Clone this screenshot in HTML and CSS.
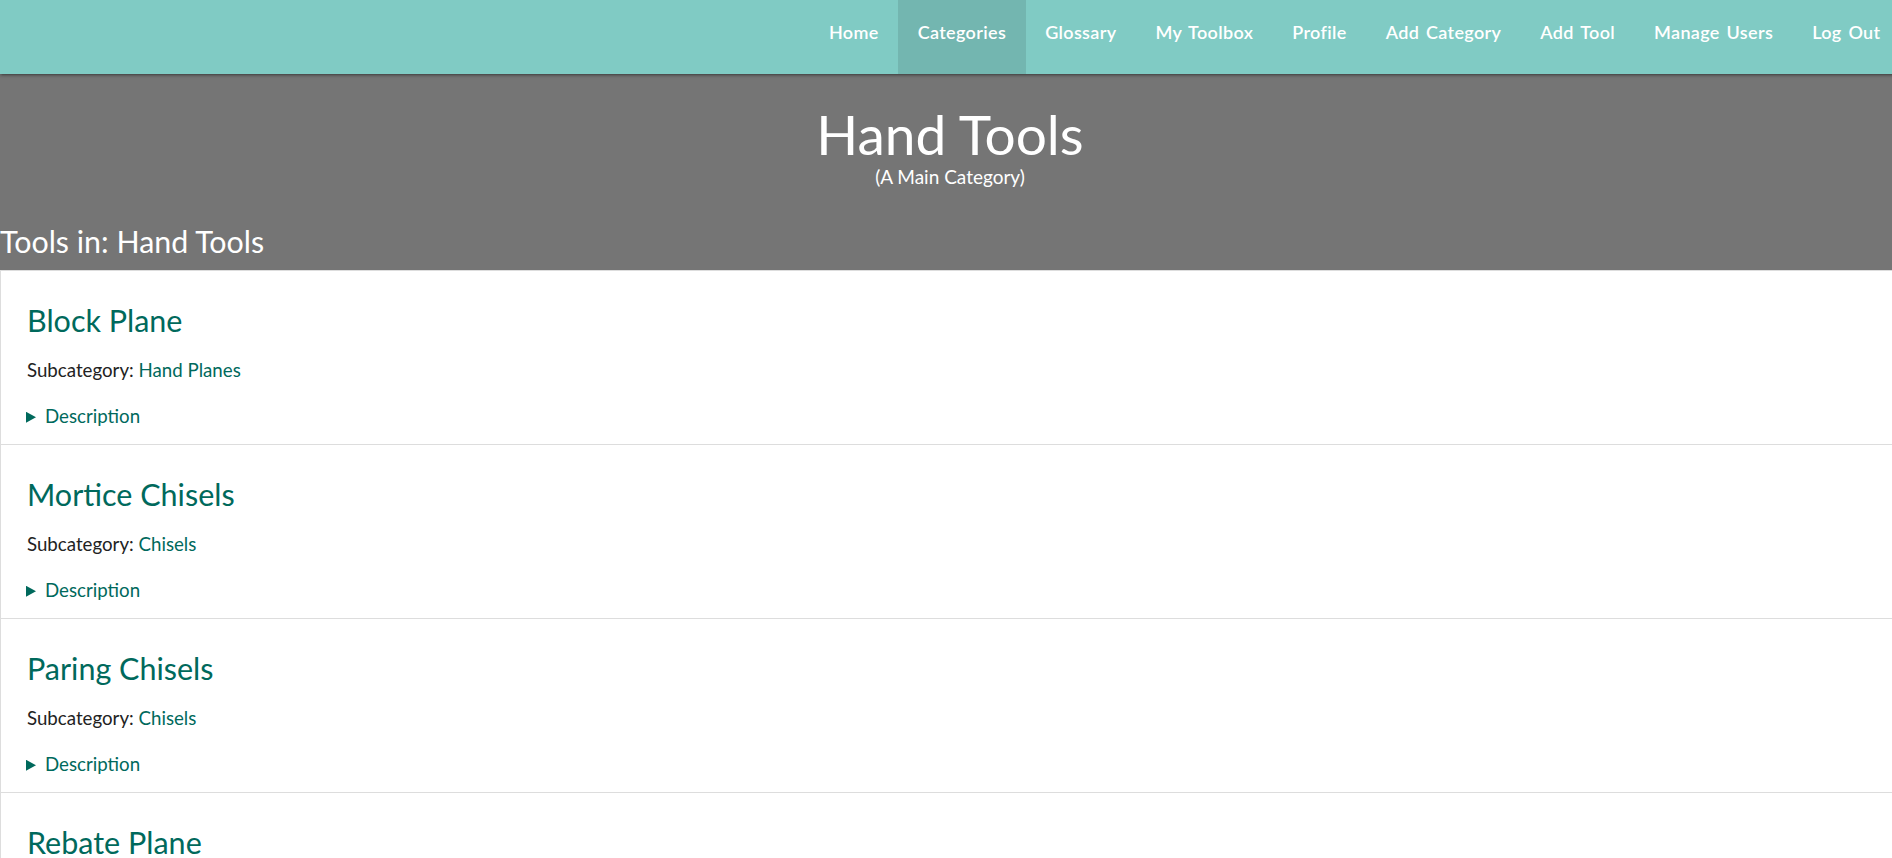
FILE: index.html
```html
<!DOCTYPE html>
<html lang="en">
<head>
<meta charset="utf-8">
<title>Hand Tools</title>
<link rel="stylesheet" href="styles.css">
</head>
<body>
<div class="page">
  <nav class="topnav">
    <ul class="nav-list">
      <li><a href="#" class="nav-link">Home</a></li>
      <li><a href="#" class="nav-link active">Categories</a></li>
      <li><a href="#" class="nav-link">Glossary</a></li>
      <li><a href="#" class="nav-link">My Toolbox</a></li>
      <li><a href="#" class="nav-link">Profile</a></li>
      <li><a href="#" class="nav-link">Add Category</a></li>
      <li><a href="#" class="nav-link">Add Tool</a></li>
      <li><a href="#" class="nav-link">Manage Users</a></li>
      <li><a href="#" class="nav-link">Log Out</a></li>
    </ul>
  </nav>

  <header class="cat-header">
    <h1 class="cat-title">Hand Tools</h1>
    <p class="cat-sub">(A Main Category)</p>
    <h2 class="cat-tools">Tools in: Hand Tools</h2>
  </header>

  <main class="tool-list">
    <article class="tool-card">
      <h3 class="tool-name">Block Plane</h3>
      <p class="tool-sub">Subcategory: <a href="#" class="tool-link">Hand Planes</a></p>
      <div class="tool-desc"><span class="tri"></span><span class="desc-text">Description</span></div>
    </article>
    <article class="tool-card">
      <h3 class="tool-name">Mortice Chisels</h3>
      <p class="tool-sub">Subcategory: <a href="#" class="tool-link">Chisels</a></p>
      <div class="tool-desc"><span class="tri"></span><span class="desc-text">Description</span></div>
    </article>
    <article class="tool-card">
      <h3 class="tool-name">Paring Chisels</h3>
      <p class="tool-sub">Subcategory: <a href="#" class="tool-link">Chisels</a></p>
      <div class="tool-desc"><span class="tri"></span><span class="desc-text">Description</span></div>
    </article>
    <article class="tool-card">
      <h3 class="tool-name">Rebate Plane</h3>
      <p class="tool-sub">Subcategory: <a href="#" class="tool-link">Hand Planes</a></p>
      <div class="tool-desc"><span class="tri"></span><span class="desc-text">Description</span></div>
    </article>
  </main>
</div>
</body>
</html>
```

FILE: styles.css
```css
html {
  scrollbar-width: none;
  overflow-x: hidden;
}
html::-webkit-scrollbar { display: none; }

body {
  margin: 0;
  overflow-x: hidden;
  background: #ffffff;
  font-family: Lato, "Noto Sans", sans-serif;
  color: #222222;
}

.page {
  width: calc(100% + 8px);
}

/* ---------- top navigation ---------- */
.topnav {
  position: relative;
  z-index: 2;
  height: 74px;
  background: #80cbc4;
  box-shadow: 0 2px 2px 0 rgba(0,0,0,0.14), 0 3px 1px -2px rgba(0,0,0,0.12), 0 1px 5px 0 rgba(0,0,0,0.2);
}

.nav-list {
  display: flex;
  justify-content: flex-end;
  height: 100%;
  margin: 0;
  padding: 0;
  list-style: none;
}

.nav-link {
  display: block;
  height: 74px;
  padding: 0 19.5px;
  line-height: 65px;
  font-size: 18px;
  font-weight: 600;
  letter-spacing: 0.35px;
  word-spacing: 2px;
  color: #ffffff;
  text-decoration: none;
}

.nav-link.active {
  background: rgba(0,0,0,0.1);
}

/* ---------- category header ---------- */
.cat-header {
  background: #757575;
  color: #ffffff;
  padding: 27px 0 11px;
}

.cat-title {
  margin: 0;
  text-align: center;
  font-size: 55px;
  font-weight: 400;
  line-height: 1.2;
}

.cat-sub {
  margin: -1px 0 0;
  text-align: center;
  font-size: 19px;
  line-height: 1.2;
}

.cat-tools {
  margin: 34px 0 0;
  font-size: 30.4px;
  font-weight: 400;
  line-height: 1.2;
}

/* ---------- tool cards ---------- */
.tool-list {
  border-top: 1px solid #dddddd;
}

.tool-card {
  padding: 31px 26px 16px;
  border-left: 1px solid #dddddd;
  border-bottom: 1px solid #dddddd;
}

.tool-name {
  margin: 0 0 20px;
  font-size: 30.5px;
  font-weight: 400;
  line-height: 37px;
  color: #00695c;
}

.tool-sub {
  margin: 0 0 23px;
  font-size: 18.7px;
  line-height: 23px;
  color: #222222;
}

.tool-link {
  color: #00695c;
  text-decoration: none;
}

.tool-desc {
  display: flex;
  align-items: center;
  font-size: 18.7px;
  line-height: 23px;
  color: #00695c;
}

.tri {
  flex: none;
  width: 10px;
  height: 11px;
  margin: 1px 9px 0 -1px;
  background: #00695c;
  clip-path: polygon(0 0, 100% 50%, 0 100%);
}
```
